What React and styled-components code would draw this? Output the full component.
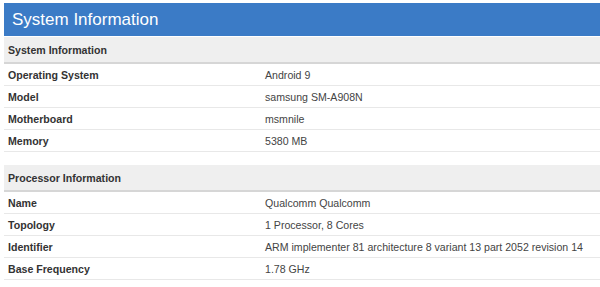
import React from "react";
import styled, { createGlobalStyle } from "styled-components";

const GlobalStyle = createGlobalStyle`
  body {
    margin: 0;
    background: #ffffff;
    font-family: "Liberation Sans", Arial, sans-serif;
  }
`;

const sections = [
  {
    title: "System Information",
    rows: [
      ["Operating System", "Android 9"],
      ["Model", "samsung SM-A908N"],
      ["Motherboard", "msmnile"],
      ["Memory", "5380 MB"],
    ],
  },
  {
    title: "Processor Information",
    rows: [
      ["Name", "Qualcomm Qualcomm"],
      ["Topology", "1 Processor, 8 Cores"],
      ["Identifier", "ARM implementer 81 architecture 8 variant 13 part 2052 revision 14"],
      ["Base Frequency", "1.78 GHz"],
    ],
  },
];

const App = () => {
  return (
    <Page>
      <GlobalStyle />
      <Title>System Information</Title>
      {sections.map((section) => (
        <Section key={section.title}>
          <SectionHead>{section.title}</SectionHead>
          {section.rows.map(([label, value]) => (
            <Row key={label}>
              <Label>{label}</Label>
              <Value>{value}</Value>
            </Row>
          ))}
        </Section>
      ))}
    </Page>
  );
};

export default App;

const Page = styled.div`
  padding: 3px 0 0 4px;
  width: 596px;
  height: 284px;
  overflow: hidden;
`;

const Title = styled.h1`
  margin: 0;
  height: 33px;
  display: flex;
  align-items: center;
  padding-left: 8px;
  background-color: #3b7bc6;
  color: #ffffff;
  font-size: 17px;
  font-weight: normal;
`;

const Section = styled.div`
  margin-top: 1px;

  & + & {
    margin-top: 13px;
  }
`;

const SectionHead = styled.div`
  height: 25px;
  display: flex;
  align-items: center;
  padding-left: 4px;
  background-color: #efefef;
  border-bottom: 2px solid #d6d6d6;
  color: #333333;
  font-size: 10.6px;
  font-weight: bold;
`;

const Row = styled.div`
  display: grid;
  grid-template-columns: 257px 1fr;
  height: 21px;
  align-items: center;
  border-bottom: 1px solid #e8e8e8;
  font-size: 10.6px;
`;

const Label = styled.div`
  padding-left: 4px;
  color: #333333;
  font-weight: bold;
`;

const Value = styled.div`
  padding-left: 4px;
  color: #444444;
`;
